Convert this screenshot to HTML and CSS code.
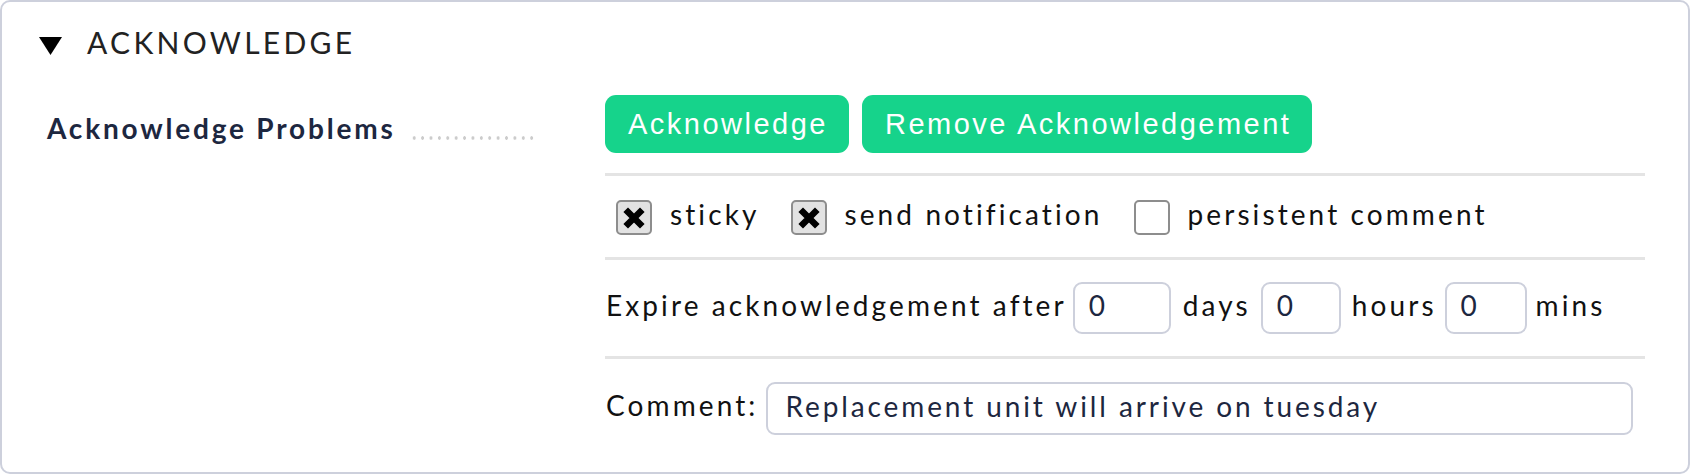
FILE: index.html
```html
<!DOCTYPE html>
<html lang="en">
<head>
<meta charset="utf-8">
<title>Acknowledge</title>
<link rel="stylesheet" href="styles.css">
</head>
<body>
<div class="panel">
  <div class="panel-head">
    <svg class="caret" width="23" height="18" viewBox="0 0 23 18"><polygon points="0,0 23,0 11.5,18" fill="#000"/></svg>
    <span class="panel-title">ACKNOWLEDGE</span>
  </div>
  <div class="form-row">
    <div class="label-col">
      <span class="label-text">Acknowledge Problems</span>
      <span class="leader"></span>
    </div>
    <div class="content-col">
      <div class="sec sec-buttons">
        <button class="btn">Acknowledge</button>
        <button class="btn">Remove Acknowledgement</button>
      </div>
      <div class="sec sec-checks">
        <label class="check">
          <span class="box checked"><svg width="22" height="22" viewBox="0 0 22 22"><path d="M5 5 L17 17 M17 5 L5 17" stroke="#000" stroke-width="6.5" stroke-linecap="square"/></svg></span>
          <span class="txt">sticky</span>
        </label>
        <label class="check">
          <span class="box checked"><svg width="22" height="22" viewBox="0 0 22 22"><path d="M5 5 L17 17 M17 5 L5 17" stroke="#000" stroke-width="6.5" stroke-linecap="square"/></svg></span>
          <span class="txt">send notification</span>
        </label>
        <label class="check">
          <span class="box"></span>
          <span class="txt">persistent comment</span>
        </label>
      </div>
      <div class="sec sec-expire">
        <span class="txt">Expire acknowledgement after</span>
        <span class="field field-days">0</span>
        <span class="txt">days</span>
        <span class="field field-hours">0</span>
        <span class="txt">hours</span>
        <span class="field field-mins">0</span>
        <span class="txt">mins</span>
      </div>
      <div class="sec sec-comment">
        <span class="txt">Comment:</span>
        <span class="field field-comment">Replacement unit will arrive on tuesday</span>
      </div>
    </div>
  </div>
</div>
</body>
</html>
```

FILE: styles.css
```css
* { box-sizing: border-box; }
html, body { margin: 0; padding: 0; background: #fff; }
body { font-family: "Lato", "Noto Sans", sans-serif; color: #111; }

.panel {
  width: 1690px;
  height: 474px;
  border: 2px solid #cdd0dc;
  border-radius: 10px;
  background: #fff;
}

.panel-head {
  display: flex;
  align-items: center;
  padding: 19px 0 0 37px;
  height: 61px;
}
.caret { display: block; margin: 8px 25px 0 0; }
.panel-title {
  font-size: 30px;
  line-height: 40px;
  letter-spacing: 3.3px;
  color: #222;
}

.form-row { display: flex; margin-top: 32px; }
.label-col {
  width: 603px;
  padding: 4px 0 0 45px;
  display: flex;
  align-items: flex-start;
}
.label-text {
  font-weight: 700;
  font-size: 28px;
  line-height: 58px;
  letter-spacing: 2.8px;
  color: #1d2740;
  white-space: nowrap;
}
.leader {
  width: 126px;
  height: 4px;
  margin: 37px 0 0 14px;
  background-image: radial-gradient(circle, #cccccc 1.5px, transparent 1.9px);
  background-size: 8.4px 4px;
  background-repeat: repeat-x;
}

.content-col { width: 1040px; }

.sec { display: flex; align-items: center; }
.sec + .sec { border-top: 3px solid #e4e4e4; }
.sec-buttons { gap: 13px; padding-bottom: 20px; }
.sec-checks { padding: 24px 0 22px 11px; }
.sec-expire { padding: 22px 0 22px 1px; }
.sec-comment { padding: 23px 0 0 1px; }

.btn {
  height: 58px;
  padding: 0 21px 0 23px;
  border: none;
  border-radius: 11px;
  background: #16d38b;
  color: #fff;
  font-family: "Liberation Sans", Arial, sans-serif;
  font-size: 29px;
  letter-spacing: 2.5px;
}

.check { display: flex; align-items: center; margin-right: 31px; }
.box {
  width: 36px;
  height: 35px;
  border: 2px solid #8d8d8d;
  border-radius: 5px;
  background: #fff;
  display: flex;
  align-items: center;
  justify-content: center;
  margin-right: 18px;
}
.box.checked { background: #e2e2e2; }
.box svg { display: block; }

.txt {
  font-size: 28px;
  line-height: 28px;
  letter-spacing: 3.1px;
  color: #111;
  white-space: nowrap;
  margin-bottom: 7px;
}

.field {
  display: flex;
  align-items: center;
  height: 52px;
  padding: 0 0 6px 14px;
  border: 2px solid #cdd0dc;
  border-radius: 9px;
  font-size: 28px;
  letter-spacing: 2.9px;
  color: #1d2740;
  white-space: nowrap;
}
.field-days { width: 98px; margin: 0 12px 0 6px; }
.field-hours { width: 80px; margin: 0 11px 0 10px; }
.field-mins { width: 82px; margin: 0 9px 0 8px; }
.field-comment {
  flex: 1;
  height: 53px;
  padding-left: 17px;
  margin: 0 12px 0 8px;
}
```
